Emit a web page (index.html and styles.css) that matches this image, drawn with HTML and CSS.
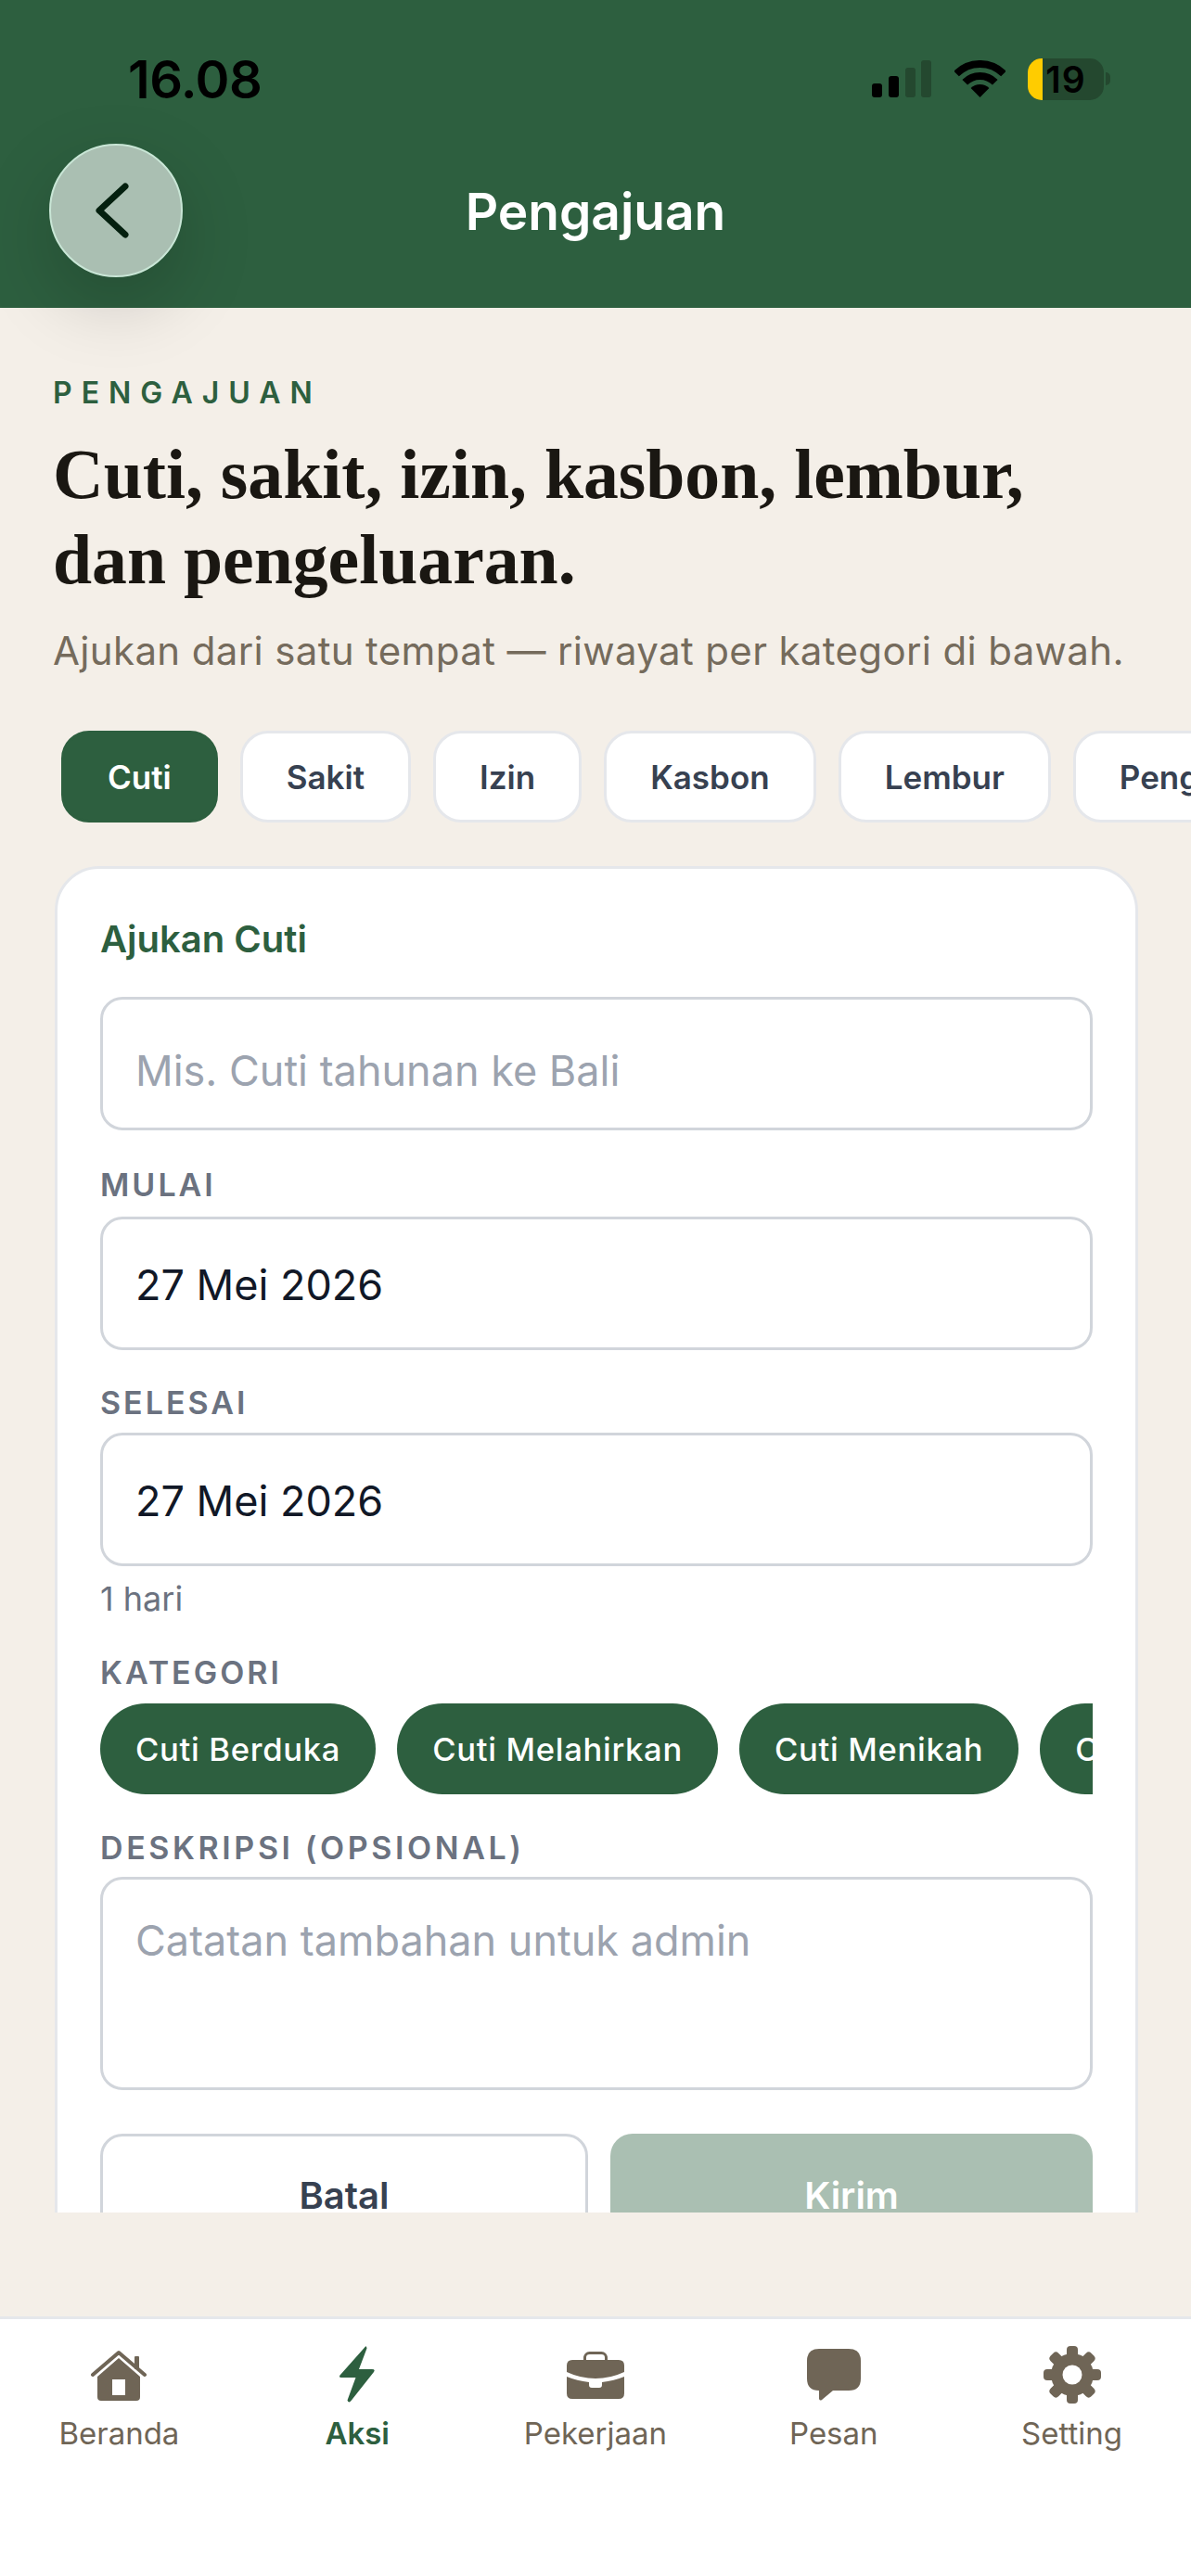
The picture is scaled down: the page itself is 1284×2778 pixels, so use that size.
FILE: index.html
```html
<!DOCTYPE html>
<html>
<head>
<title>Pengajuan</title>
<link rel="stylesheet" href="styles.css">
</head>
<body>
<div id="app">
    <header id="topbar">
        <div class="status">
            <span class="clock">16.08</span>
            <div class="status-icons">
                <svg class="signal" width="64" height="40" viewBox="0 0 64 40">
                    <rect x="0" y="25" width="11" height="15" rx="3" fill="#000"/>
                    <rect x="18" y="17" width="11" height="23" rx="3" fill="#000"/>
                    <rect x="36" y="8" width="11" height="32" rx="3" fill="#24482f"/>
                    <rect x="53" y="0" width="11" height="40" rx="3" fill="#24482f"/>
                </svg>
                <svg class="wifi" width="55" height="40" viewBox="0 0 55 40">
                    <path d="M2.04 14.54A36 36 0 0 1 52.96 14.54" fill="none" stroke="#000" stroke-width="8"/>
                    <path d="M11.24 23.74A23 23 0 0 1 43.76 23.74" fill="none" stroke="#000" stroke-width="8"/>
                    <path d="M27.5 40L17.6 30.1A14 14 0 0 1 37.4 30.1Z" fill="#000"/>
                </svg>
                <div class="battery">
                    <div class="battery-fill"></div>
                    <span class="battery-text">19</span>
                </div>
                <div class="battery-nub"></div>
            </div>
        </div>
        <div class="titlebar">
            <div class="back">
                <svg width="44" height="64" viewBox="0 0 44 64">
                    <path d="M36 6L8 32L36 58" fill="none" stroke="#04200f" stroke-width="7" stroke-linecap="round" stroke-linejoin="round"/>
                </svg>
            </div>
            <h1 class="page-title">Pengajuan</h1>
        </div>
    </header>

    <main id="content">
        <div class="eyebrow">PENGAJUAN</div>
        <h2 class="headline">Cuti, sakit, izin, kasbon, lembur,<br>dan pengeluaran.</h2>
        <p class="lead">Ajukan dari satu tempat — riwayat per kategori di bawah.</p>

        <div class="tabs">
            <div class="tab active">Cuti</div>
            <div class="tab">Sakit</div>
            <div class="tab">Izin</div>
            <div class="tab">Kasbon</div>
            <div class="tab">Lembur</div>
            <div class="tab">Pengeluaran</div>
        </div>

        <section class="card">
            <div class="card-title">Ajukan Cuti</div>
            <input class="field field-title" type="text" placeholder="Mis. Cuti tahunan ke Bali">
            <label class="label label-start">MULAI</label>
            <input class="field field-date" type="text" value="27 Mei 2026">
            <label class="label label-end">SELESAI</label>
            <input class="field field-date" type="text" value="27 Mei 2026">
            <div class="hint">1 hari</div>
            <label class="label label-tight">KATEGORI</label>
            <div class="pills">
                <div class="pill">Cuti Berduka</div>
                <div class="pill">Cuti Melahirkan</div>
                <div class="pill">Cuti Menikah</div>
                <div class="pill">Cuti Tahunan</div>
            </div>
            <label class="label label-note">DESKRIPSI (OPSIONAL)</label>
            <textarea class="field area" placeholder="Catatan tambahan untuk admin"></textarea>
            <div class="actions">
                <button class="btn btn-cancel">Batal</button>
                <button class="btn btn-send">Kirim</button>
            </div>
        </section>
    </main>
    <div id="spacer"></div>

    <nav id="tabbar">
        <div class="nav-item">
            <svg class="nav-icon" width="64" height="66" viewBox="0 0 64 66">
                <path d="M4 33L32 9L60 33" fill="none" stroke="#6f6556" stroke-width="4" stroke-linecap="round" stroke-linejoin="round"/>
                <rect x="49" y="13" width="5" height="14" rx="1" fill="#6f6556"/>
                <path fill-rule="evenodd" d="M32 15L55 35V57q0 4-4 4H13q-4 0-4-4V35ZM25 38V55H39V38Z" fill="#6f6556"/>
            </svg>
            <span class="nav-label">Beranda</span>
        </div>
        <div class="nav-item current">
            <svg class="nav-icon" width="64" height="66" viewBox="0 0 64 66">
                <path d="M41 2.5L13.5 33.5Q12 36 15 36H30.5L21.5 60.5Q23 64 25.5 61L50 30Q52 27 48 27H34L42.5 4.5Q42 1.5 41 2.5Z" fill="#2d5f3f"/>
            </svg>
            <span class="nav-label">Aksi</span>
        </div>
        <div class="nav-item">
            <svg class="nav-icon" width="64" height="66" viewBox="0 0 64 66">
                <rect x="20.5" y="9.5" width="23" height="14" rx="5" fill="none" stroke="#6f6556" stroke-width="3"/>
                <path d="M7 17H57q6 0 6 6V30Q48 37 32 37Q16 37 1 30V23q0-6 6-6Z" fill="#6f6556"/>
                <path d="M1 35Q12 39.5 25 41V44q0 3 3 3h8q3 0 3-3V41Q52 39.5 63 35V53q0 6-6 6H7q-6 0-6-6Z" fill="#6f6556"/>
            </svg>
            <span class="nav-label">Pekerjaan</span>
        </div>
        <div class="nav-item">
            <svg class="nav-icon" width="64" height="66" viewBox="0 0 64 66">
                <path d="M16 5H48q13 0 13 13V37q0 13-13 13H31L19 60q-2 1.500-3-1V50q-13 0-13-13V18Q3 5 16 5Z" fill="#6f6556"/>
            </svg>
            <span class="nav-label">Pesan</span>
        </div>
        <div class="nav-item">
            <svg class="nav-icon" width="64" height="66" viewBox="0 0 64 66">
                <g fill="#6f6556">
                    <circle cx="32" cy="33" r="23"/>
                    <rect x="26" y="2" width="12" height="62" rx="4"/>
                    <rect x="26" y="2" width="12" height="62" rx="4" transform="rotate(45 32 33)"/>
                    <rect x="26" y="2" width="12" height="62" rx="4" transform="rotate(90 32 33)"/>
                    <rect x="26" y="2" width="12" height="62" rx="4" transform="rotate(135 32 33)"/>
                </g>
                <circle cx="32" cy="33" r="10.500" fill="#fff"/>
            </svg>
            <span class="nav-label">Setting</span>
        </div>
    </nav>
</div>
</body>
</html>
```

FILE: styles.css
```css
* {
    box-sizing: border-box;
}
html, body {
    margin: 0;
    padding: 0;
    background-color: #f4efe8;
    font-family: "Inter", "Liberation Sans", sans-serif;
}
#app {
    width: 1284px;
    height: 2778px;
    display: flex;
    flex-direction: column;
    overflow: hidden;
}

/* top bar */
#topbar {
    height: 332px;
    flex: none;
    background-color: #2d5f3f;
    position: relative;
    z-index: 2;
}
.status {
    height: 155px;
    padding: 61px 87px 0 138px;
    display: flex;
    justify-content: space-between;
    align-items: flex-start;
}
.clock {
    font-size: 56px;
    font-weight: 600;
    line-height: 50px;
    letter-spacing: -0.5px;
    color: #000;
}
.status-icons {
    display: flex;
    align-items: flex-start;
    margin-top: 2px;
}
.signal {
    margin-top: 2px;
}
.wifi {
    margin: 2px 0 0 25px;
}
.battery {
    width: 82px;
    height: 45px;
    margin-left: 24px;
    border-radius: 15px;
    background-color: #24482f;
    position: relative;
    overflow: hidden;
    display: flex;
    align-items: center;
    justify-content: center;
}
.battery-fill {
    position: absolute;
    left: 0;
    top: 0;
    bottom: 0;
    width: 16px;
    background-color: #ffcc00;
}
.battery-text {
    font-size: 39px;
    font-weight: 600;
    letter-spacing: 1px;
    color: #000;
    position: relative;
}
.battery-nub {
    width: 5px;
    height: 14px;
    margin: 15px 0 0 2px;
    border-radius: 0 7px 7px 0;
    background-color: #24482f;
}
.titlebar {
    display: grid;
    grid-template-columns: 145px 1fr 145px;
    align-items: center;
    padding: 0 53px;
}
.back {
    width: 144px;
    height: 144px;
    border-radius: 50%;
    background-color: #aabfb2;
    border: 2px solid #c9e6d6;
    box-shadow: 0 28px 80px rgba(0, 0, 0, 0.18);
    display: flex;
    align-items: center;
    justify-content: center;
    padding-right: 8px;
}
.page-title {
    margin: 2px 0 0;
    text-align: center;
    font-size: 55px;
    font-weight: 600;
    color: #fff;
}

/* content */
#content {
    height: 2054px;
    flex: none;
    overflow: hidden;
    padding: 76px 57px 0 57px;
}
.eyebrow {
    font-size: 32px;
    line-height: 32px;
    font-weight: 600;
    letter-spacing: 10px;
    color: #2d5f3f;
}
.headline {
    margin: 26px 0 0;
    font-family: "Liberation Serif", serif;
    font-size: 75.700px;
    line-height: 92px;
    font-weight: 700;
    color: #1a1712;
}
.lead {
    margin: 24px 0 0;
    font-size: 42px;
    line-height: 56px;
    letter-spacing: 0.350px;
    color: #756b5c;
    white-space: nowrap;
}
.tabs {
    margin: 58px -57px 0 0;
    padding-left: 9px;
    display: flex;
    gap: 24px;
    overflow: hidden;
}
.tab {
    height: 99px;
    flex: none;
    padding: 0 47px;
    border: 3px solid #e5e7eb;
    border-radius: 30px;
    background-color: #fff;
    font-size: 35px;
    line-height: 95px;
    font-weight: 600;
    color: #374151;
}
.tab.active {
    background-color: #2d5f3f;
    border-color: #2d5f3f;
    color: #fff;
}
.card {
    margin: 47px 0 0 2px;
    padding: 50px 46px 0;
    border: 3px solid #e5e7eb;
    border-radius: 48px;
    background-color: #fff;
}
.card-title {
    font-size: 40px;
    line-height: 52px;
    font-weight: 600;
    color: #2d5f3f;
    margin-bottom: 36px;
}
.field {
    display: block;
    width: 100%;
    height: 144px;
    padding: 0 35px;
    border: 3px solid #d1d5db;
    border-radius: 24px;
    background-color: #fff;
    font-family: inherit;
    font-size: 45px;
    color: #111827;
    outline: none;
}
.field::placeholder {
    color: #9ca3af;
}
.field-title {
    padding-top: 14px;
}
.field-date {
    padding-top: 2px;
}
.area {
    height: 230px;
    padding-top: 38px;
    resize: none;
}
.label {
    display: block;
    margin: 37px 0 10px;
    font-size: 34px;
    line-height: 44px;
    font-weight: 600;
    letter-spacing: 3px;
    color: #6b7280;
}
.label-start {
    margin-bottom: 12px;
}
.label-end {
    margin-top: 35px;
}
.label-tight {
    margin-top: 36px;
    margin-bottom: 11px;
}
.label-note {
    margin-top: 36px;
    margin-bottom: 9px;
    letter-spacing: 3.600px;
}
.hint {
    margin-top: 13px;
    font-size: 36px;
    line-height: 44px;
    color: #6b7280;
}
.pills {
    display: flex;
    gap: 23px;
    overflow: hidden;
}
.pill {
    height: 98px;
    flex: none;
    padding: 0 38px;
    border-radius: 49px;
    background-color: #2d5f3f;
    font-size: 34.600px;
    line-height: 98px;
    font-weight: 500;
    letter-spacing: 0.700px;
    color: #fff;
}
.actions {
    margin-top: 47px;
    display: grid;
    grid-template-columns: 526px 1fr;
    gap: 24px;
}
.btn {
    height: 132px;
    border-radius: 24px;
    font-family: inherit;
    font-size: 40px;
    font-weight: 600;
}
.btn-cancel {
    background-color: #fff;
    border: 3px solid #d1d5db;
    color: #374151;
}
.btn-send {
    background-color: #aabfb2;
    border: none;
    color: #fff;
}
#spacer {
    height: 112px;
    flex: none;
}

/* bottom nav */
#tabbar {
    height: 280px;
    flex: none;
    background-color: #fff;
    border-top: 3px solid #e5e7eb;
    padding-top: 27px;
    display: grid;
    grid-template-columns: repeat(5, 1fr);
}
.nav-item {
    display: flex;
    flex-direction: column;
    align-items: center;
}
.nav-label {
    margin-top: 8px;
    font-size: 33px;
    line-height: 44px;
    color: #6f6556;
}
.current .nav-label {
    font-weight: 600;
    color: #2d5f3f;
}
```
